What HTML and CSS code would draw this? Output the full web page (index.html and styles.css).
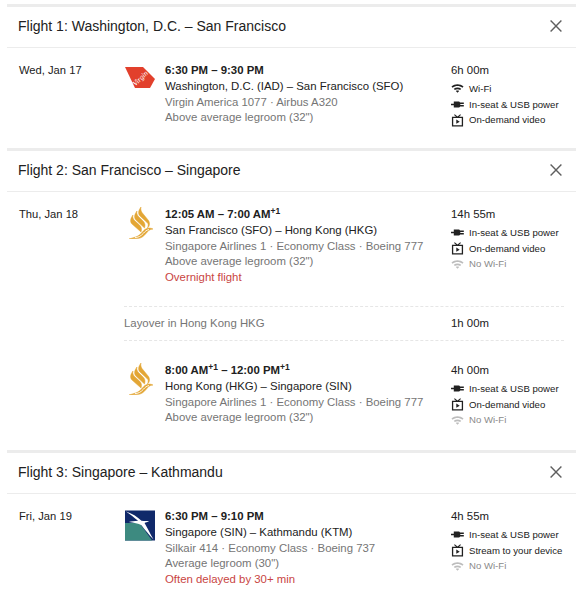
FILE: index.html
```html
<!DOCTYPE html>
<html lang="en">
<head>
<meta charset="utf-8">
<title>Flights</title>
<link rel="stylesheet" href="styles.css">
</head>
<body>
<svg class="defs" width="0" height="0" aria-hidden="true">
  <defs>
    <symbol id="i-wifi" viewBox="0 0 14 12"><path d="M.5 3.800C4.300.8 9.700.8 13.500 3.800l-1.200 1.300C9.100 2.800 4.900 2.800 1.700 5.100zM3 6.300c2.500-1.800 5.500-1.800 8 0L9.900 7.600c-1.800-1.200-4-1.200-5.800 0zM5.200 8.700c1.100-.7 2.500-.7 3.600 0L7 10.600z" fill="currentColor"/></symbol>
    <symbol id="i-power" viewBox="0 0 14 12"><path d="M0 5.100h3V2.800H8c.9 0 1.500.5 1.800 1.100H13.800v1.500H10v1.200H13.800v1.500H9.800c-.3.6-.9 1.100-1.800 1.100H3V6.900H0z" fill="currentColor"/></symbol>
    <symbol id="i-video" viewBox="0 0 14 14"><path d="M4 .4l3 2.300 3-2.300.7.800L8.600 3H13v10.500H1V3h4.400L3.300 1.200zM2.400 4.400v7.700h9.200V4.400zM5.700 6l3.700 2.300-3.700 2.200z" fill="currentColor" fill-rule="evenodd"/></symbol>
    <symbol id="i-sq" viewBox="0 0 24 32">
      <g fill="#e3a635" stroke="#e3a635" stroke-width=".5">
        <path d="M4 8C1 12 1 15 3 17l9 8c1-3 .5-5-1.500-7L5 13C4 11.500 3.500 10 4 8z"/>
        <path d="M8 4C5 8 5 11 7 13l8.500 8c1-3 .5-5-1.500-7L9 9C8 7.500 7.500 6 8 4z"/>
        <path d="M12 0C9 4 9 7 11 9l7 6.500c1.500 1.300 1.500 3 .5 5.500 2-1.500 2.800-4.500 1-7.500L13 5.500C12 4 11.500 2 12 0z"/>
        <path d="M0 32l8.500-.4c3.500-.2 6.500-2.400 8.500-5 1.700-2.400 3.500-4.300 7-4.600-3.500-1.700-7-1-9.500 1.800-2.500 3-4.500 5-8 6.200z"/>
      </g>
      <path d="M6 30.500c3 .2 6-1.400 8.500-4.300 1.500-1.800 3.200-3.200 5.500-3.700" fill="none" stroke="#fff" stroke-width=".9"/>
    </symbol>
  </defs>
</svg>

<main class="itinerary">

  <section class="flight">
    <header class="flight-head">
      <h2>Flight 1: Washington, D.C. – San Francisco</h2>
      <svg class="close" viewBox="0 0 12 12"><path d="M.6.600l10.800 10.800M11.400.600L.6 11.400"/></svg>
    </header>
    <div class="leg leg-one">
      <div class="date">Wed, Jan 17</div>
      <div class="logo">
        <svg class="logo-va" viewBox="0 0 30 21"><path d="M0 0h18l12 12-5 9H10z" fill="#e2402c"/><text class="va-script" text-anchor="middle" transform="translate(17 13) rotate(-45)">Virgin</text></svg>
      </div>
      <div class="info">
        <div class="times">6:30 PM – 9:30 PM</div>
        <div>Washington, D.C. (IAD) – San Francisco (SFO)</div>
        <div class="muted">Virgin America 1077 · Airbus A320</div>
        <div class="muted">Above average legroom (32")</div>
      </div>
      <div class="side">
        <div class="duration">6h 00m</div>
        <ul class="amenities">
          <li><svg class="ico"><use href="#i-wifi"/></svg>Wi-Fi</li>
          <li><svg class="ico"><use href="#i-power"/></svg>In-seat &amp; USB power</li>
          <li><svg class="ico"><use href="#i-video"/></svg>On-demand video</li>
        </ul>
      </div>
    </div>
  </section>

  <section class="flight">
    <header class="flight-head">
      <h2>Flight 2: San Francisco – Singapore</h2>
      <svg class="close" viewBox="0 0 12 12"><path d="M.6.600l10.800 10.800M11.400.600L.6 11.400"/></svg>
    </header>
    <div class="leg leg-two">
      <div class="date">Thu, Jan 18</div>
      <div class="logo"><svg class="logo-sq"><use href="#i-sq"/></svg></div>
      <div class="info">
        <div class="times">12:05 AM – 7:00 AM<sup>+1</sup></div>
        <div>San Francisco (SFO) – Hong Kong (HKG)</div>
        <div class="muted">Singapore Airlines 1 · Economy Class · Boeing 777</div>
        <div class="muted">Above average legroom (32")</div>
        <div class="warn">Overnight flight</div>
      </div>
      <div class="side">
        <div class="duration">14h 55m</div>
        <ul class="amenities">
          <li><svg class="ico"><use href="#i-power"/></svg>In-seat &amp; USB power</li>
          <li><svg class="ico"><use href="#i-video"/></svg>On-demand video</li>
          <li class="off"><svg class="ico"><use href="#i-wifi"/></svg>No Wi-Fi</li>
        </ul>
      </div>
    </div>
    <div class="layover">
      <span class="muted">Layover in Hong Kong HKG</span>
      <span class="layover-time">1h 00m</span>
    </div>
    <div class="leg leg-three">
      <div class="date"></div>
      <div class="logo"><svg class="logo-sq"><use href="#i-sq"/></svg></div>
      <div class="info">
        <div class="times">8:00 AM<sup>+1</sup> – 12:00 PM<sup>+1</sup></div>
        <div>Hong Kong (HKG) – Singapore (SIN)</div>
        <div class="muted">Singapore Airlines 1 · Economy Class · Boeing 777</div>
        <div class="muted">Above average legroom (32")</div>
      </div>
      <div class="side">
        <div class="duration">4h 00m</div>
        <ul class="amenities">
          <li><svg class="ico"><use href="#i-power"/></svg>In-seat &amp; USB power</li>
          <li><svg class="ico"><use href="#i-video"/></svg>On-demand video</li>
          <li class="off"><svg class="ico"><use href="#i-wifi"/></svg>No Wi-Fi</li>
        </ul>
      </div>
    </div>
  </section>

  <section class="flight">
    <header class="flight-head">
      <h2>Flight 3: Singapore – Kathmandu</h2>
      <svg class="close" viewBox="0 0 12 12"><path d="M.6.600l10.800 10.800M11.400.600L.6 11.400"/></svg>
    </header>
    <div class="leg leg-four">
      <div class="date">Fri, Jan 19</div>
      <div class="logo">
        <svg class="logo-mi" viewBox="0 0 31 31"><rect width="31" height="31" fill="#10296a"/><path d="M0 13h15l13 18H0z" fill="#3d8a80"/><path d="M1 1c6 2 12 5.500 16 9.500 1.800.4 4.500.6 8 .4-2 1-3.500 1.500-4.800 1.900 2.800 4.600 5.800 11 9.300 17.200-4.600-4.600-9.500-11-12.500-14.800-3-1.800-8-2.500-13-3.200 2.500-.8 6-1.300 9.500-1.400C9.500 7.500 5.500 4 1 1z" fill="#fff"/></svg>
      </div>
      <div class="info">
        <div class="times">6:30 PM – 9:10 PM</div>
        <div>Singapore (SIN) – Kathmandu (KTM)</div>
        <div class="muted">Silkair 414 · Economy Class · Boeing 737</div>
        <div class="muted">Average legroom (30")</div>
        <div class="warn">Often delayed by 30+ min</div>
      </div>
      <div class="side">
        <div class="duration">4h 55m</div>
        <ul class="amenities">
          <li><svg class="ico"><use href="#i-power"/></svg>In-seat &amp; USB power</li>
          <li><svg class="ico"><use href="#i-video"/></svg>Stream to your device</li>
          <li class="off"><svg class="ico"><use href="#i-wifi"/></svg>No Wi-Fi</li>
        </ul>
      </div>
    </div>
  </section>

</main>
</body>
</html>
```

FILE: styles.css
```css
* { box-sizing: border-box; }

html, body { margin: 0; padding: 0; background: #fff; }

body {
  width: 582px;
  height: 595px;
  overflow: hidden;
  padding: 4px 6px 0 7px;
  font-family: "Liberation Sans", Arial, sans-serif;
  font-size: 11.400px;
  line-height: 15.800px;
  color: #212121;
}

.defs { position: absolute; }

.flight { border-top: 3px solid #ececec; }

.flight-head {
  height: 41px;
  display: flex;
  align-items: center;
  justify-content: space-between;
  padding: 0 14px 0 11px;
  border-bottom: 1px solid #ececec;
}

.flight-head h2 {
  margin: 0;
  font-size: 14px;
  font-weight: 400;
  color: #212121;
}

.close {
  width: 12px;
  height: 12px;
  margin-bottom: 2px;
  fill: none;
  stroke: #5f5f5f;
  stroke-width: 1.400;
}

.leg {
  display: grid;
  grid-template-columns: 117px 41px 286px 1fr;
}

.leg-one { height: 100px; padding-top: 15px; }
.leg-two { height: 114px; padding-top: 15px; }
.leg-three { height: 109px; padding-top: 22px; }
.leg-four { padding-top: 15px; }

.date { padding-left: 12px; font-size: 11.200px; }

.logo-va { display: block; width: 30px; height: 21px; margin: 4px 0 0 1px; }
.logo-sq { display: block; width: 24px; height: 32px; margin: 0 0 0 5px; }
.logo-mi { display: block; width: 30px; height: 31px; margin: 1px 0 0 1px; }

.va-script {
  font-family: "Liberation Serif", serif;
  font-style: italic;
  font-size: 7.500px;
  fill: #fff;
}

.info { color: #212121; }

.times { font-weight: 700; }

.times sup {
  font-size: 8.500px;
  line-height: 0;
  vertical-align: 4px;
}

.muted { color: #757575; }
.warn { color: #c9453f; }

.amenities { list-style: none; margin: 2px 0 0; padding: 0; }

.amenities li {
  display: flex;
  align-items: center;
  height: 15.800px;
  font-size: 9.600px;
}

.ico { width: 13px; height: 13px; margin-right: 5px; flex: none; }

.off { color: #8a8a8a; }
.off .ico { color: #bdbdbd; }

.layover {
  display: grid;
  grid-template-columns: 327px 1fr;
  align-items: center;
  height: 35px;
  margin: 0 12px 0 117px;
  border-top: 1px dashed #e6e6e6;
  border-bottom: 1px dashed #e6e6e6;
}
```
